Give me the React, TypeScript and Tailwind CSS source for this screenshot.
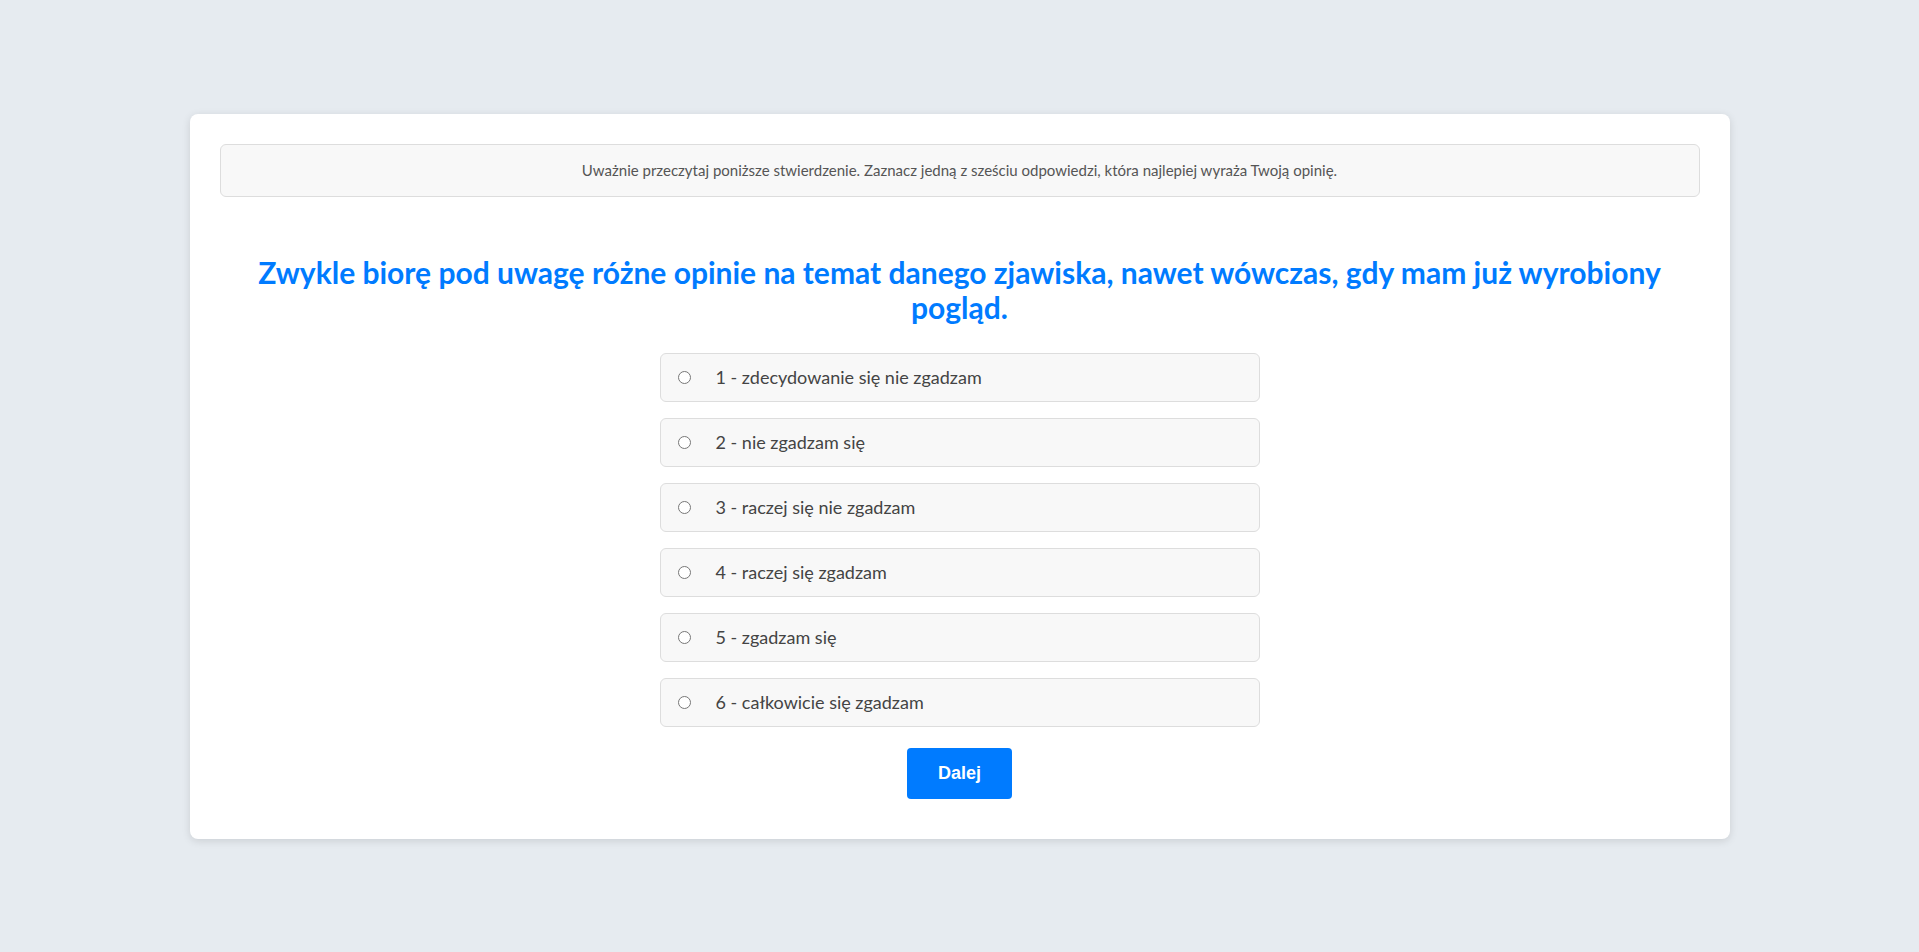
import { useState } from "react";

const options = [
  "1 - zdecydowanie się nie zgadzam",
  "2 - nie zgadzam się",
  "3 - raczej się nie zgadzam",
  "4 - raczej się zgadzam",
  "5 - zgadzam się",
  "6 - całkowicie się zgadzam",
];

export default function App() {
  const [picked, setPicked] = useState<number | null>(null);

  return (
    <div className="min-h-[952px] bg-[#e6ebf0] flex items-center justify-center font-['Lato','Open_Sans',sans-serif]">
      <div className="w-[1540px] bg-white rounded-lg shadow-[0_2px_8px_rgba(0,0,0,0.12)] p-[30px] pb-[40px]">
        <div className="bg-[#f8f8f8] border border-[#dddddd] rounded-md py-[15px] text-center text-[15px] leading-[21px] text-[#555555]">
          Uważnie przeczytaj poniższe stwierdzenie. Zaznacz jedną z sześciu odpowiedzi, która najlepiej wyraża Twoją opinię.
        </div>

        <h2 className="mt-[58px] px-[20px] text-center text-[30px] leading-[35px] font-bold text-[#007bff]">
          Zwykle biorę pod uwagę różne opinie na temat danego zjawiska, nawet wówczas, gdy mam już wyrobiony pogląd.
        </h2>

        <div className="mt-[28px] w-[600px] mx-auto flex flex-col gap-4">
          {options.map((label, i) => (
            <label
              key={label}
              className="flex items-center h-[49px] pl-[17px] pr-4 bg-[#f8f8f8] border border-[#dddddd] rounded-md cursor-pointer text-[18px] text-[#444444]"
            >
              <input
                type="radio"
                name="answer"
                checked={picked === i}
                onChange={() => setPicked(i)}
                className="w-[13px] h-[13px] m-0 accent-[#007bff]"
              />
              <span className="ml-[25px]">{label}</span>
            </label>
          ))}
        </div>

        <div className="mt-[21px] flex justify-center">
          <button className="h-[51px] px-[31px] bg-[#007bff] rounded-[4px] text-white text-[18px] font-bold font-['Liberation_Sans',Arial,sans-serif]">
            Dalej
          </button>
        </div>
      </div>
    </div>
  );
}
